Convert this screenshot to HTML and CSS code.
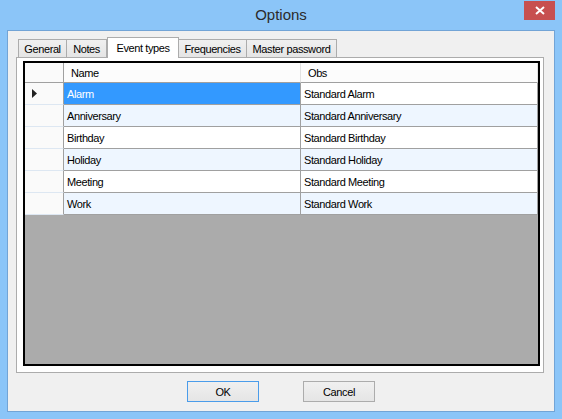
FILE: index.html
```html
<!DOCTYPE html>
<html>
<head>
<meta charset="utf-8">
<title>Options</title>
<link rel="stylesheet" href="styles.css">
</head>
<body>
<div class="window">
  <div class="titlebar">
    <span class="spacer"></span>
    <span class="title">Options</span>
    <span class="close-wrap">
      <span class="close">
        <svg width="10" height="9" viewBox="0 0 10 9"><path d="M1 1 L9 8 M9 1 L1 8" stroke="#fff" stroke-width="2" fill="none"/></svg>
      </span>
    </span>
  </div>
  <div class="client">
    <div class="tabcontrol">
      <div class="tabstrip">
        <div class="tab w-general">General</div>
        <div class="tab w-notes">Notes</div>
        <div class="tab tab-active w-event">Event types</div>
        <div class="tab w-freq">Frequencies</div>
        <div class="tab w-master">Master password</div>
      </div>
      <div class="panel">
        <div class="grid">
          <div class="row header-row">
            <div class="rh"></div>
            <div class="hc">Name</div>
            <div class="hc">Obs</div>
          </div>
          <div class="row">
            <div class="rh"><svg width="5" height="9" viewBox="0 0 5 9"><polygon points="0,0 5,4.5 0,9" fill="#222"/></svg></div>
            <div class="c sel">Alarm</div>
            <div class="c">Standard Alarm</div>
          </div>
          <div class="row alt">
            <div class="rh"></div>
            <div class="c">Anniversary</div>
            <div class="c">Standard Anniversary</div>
          </div>
          <div class="row">
            <div class="rh"></div>
            <div class="c">Birthday</div>
            <div class="c">Standard Birthday</div>
          </div>
          <div class="row alt">
            <div class="rh"></div>
            <div class="c">Holiday</div>
            <div class="c">Standard Holiday</div>
          </div>
          <div class="row">
            <div class="rh"></div>
            <div class="c">Meeting</div>
            <div class="c">Standard Meeting</div>
          </div>
          <div class="row alt">
            <div class="rh"></div>
            <div class="c">Work</div>
            <div class="c">Standard Work</div>
          </div>
        </div>
      </div>
    </div>
    <div class="buttons">
      <div class="btn btn-default">OK</div>
      <div class="btn">Cancel</div>
    </div>
  </div>
</div>
</body>
</html>
```
FILE: styles.css
```css
* { box-sizing: border-box; }
html, body { margin: 0; padding: 0; }
body {
  font-family: "Liberation Sans", Arial, sans-serif;
  font-size: 11px;
  letter-spacing: -0.4px;
  color: #000;
  background: #8bc5f8;
}
.window {
  width: 562px;
  height: 419px;
  background: #8bc5f8;
  display: flex;
  flex-direction: column;
}
.titlebar {
  height: 30px;
  display: grid;
  grid-template-columns: 1fr auto 1fr;
  align-items: start;
}
.title {
  font-size: 15px;
  letter-spacing: 0;
  color: #2b2b2b;
  line-height: 30px;
  padding-bottom: 1px;
}
.close-wrap {
  justify-self: end;
  margin-right: 7px;
  padding-top: 1px;
}
.close {
  width: 31px;
  height: 19px;
  background: #c75050;
  display: flex;
  align-items: center;
  justify-content: center;
}
.client {
  margin: 0 7px 7px 7px;
  height: 382px;
  border: 1px solid #72a4d6;
  background: #f0f0f0;
  padding: 6px 10px 0 8px;
  display: flex;
  flex-direction: column;
}
.tabcontrol {
  display: flex;
  flex-direction: column;
  height: 336px;
}
.tabstrip {
  height: 20px;
  display: flex;
  align-items: flex-end;
  padding-left: 2px;
}
.tab {
  height: 18px;
  border: 1px solid #acacac;
  border-bottom: none;
  background: linear-gradient(#f0f0f0, #e5e5e5);
  display: flex;
  align-items: center;
  justify-content: center;
  padding-top: 1px;
  white-space: nowrap;
}
.tab + .tab { border-left: none; }
.tab-active {
  height: 21px;
  background: #fff;
  margin-bottom: -1px;
  position: relative;
  z-index: 1;
  border-left: 1px solid #acacac !important;
  padding-bottom: 2px;
}
.tab-active + .tab { border-left: none; }
.w-general { width: 49px; }
.w-notes { width: 40px; }
.w-event { width: 72px; }
.w-freq { width: 68px; }
.w-master { width: 90px; }
.panel {
  flex: 1;
  border: 1px solid #acacac;
  background: #fff;
  padding: 3px 3px 6px 6px;
  display: flex;
}
.grid {
  flex: 1;
  border: 2px solid #000;
  background: #ababab;
  display: flex;
  flex-direction: column;
}
.row {
  display: grid;
  grid-template-columns: 39px 237px 237px;
  height: 22px;
  background: #fff;
}
.row.alt { background: #eef6ff; }
.header-row {
  height: 20px;
  background: #fcfcfc;
}
.rh {
  background: #fafafa;
  border-right: 1px solid #a0a0a0;
  border-bottom: 1px solid #dde7f2;
  display: flex;
  align-items: center;
  padding-left: 7px;
}
.header-row .rh { border-bottom: 1px solid #a0a0a0; }
.hc {
  border-right: 1px solid #e2e2e2;
  border-bottom: 1px solid #a0a0a0;
  padding-left: 7px;
  display: flex;
  align-items: center;
}
.c {
  border-right: 1px solid #a0a0a0;
  border-bottom: 1px solid #a0a0a0;
  padding-left: 3px;
  display: flex;
  align-items: center;
}
.c.sel {
  background: #3399ff;
  color: #fff;
}
.buttons {
  margin-top: 8px;
  display: flex;
  justify-content: center;
  gap: 44px;
  padding-left: 2px;
}
.btn {
  width: 72px;
  height: 21px;
  border: 1px solid #acacac;
  background: linear-gradient(#f0f0f0, #e5e5e5);
  display: flex;
  align-items: center;
  justify-content: center;
}
.btn-default { border-color: #4a9cea; }
```
